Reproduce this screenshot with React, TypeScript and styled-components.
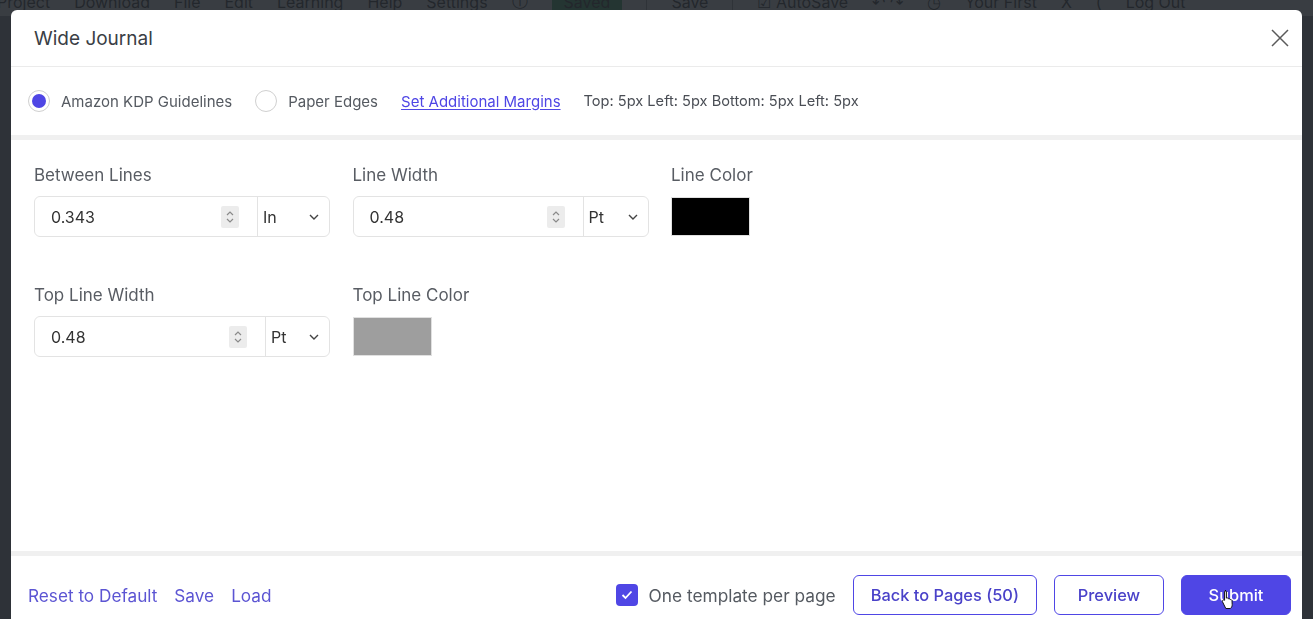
import React from 'react'
import styled, { createGlobalStyle } from 'styled-components'

const GlobalStyle = createGlobalStyle`
  html, body {
    margin: 0;
    height: 100%;
    overflow: hidden;
  }
  body {
    font-family: Inter, "Noto Sans", sans-serif;
    background-color: #8a8f96;
  }
`

const indigo = '#4f46e5'

// app behind the modal, mostly hidden
const AppBar = styled.header`
	display: flex;
	align-items: center;
	gap: 24px;
	height: 28px;
	margin-top: -12px;
	margin-left: -3px;
	background-color: #ffffff;
	color: #222;
	font-size: 16px;
	white-space: nowrap;
`

const AppItem = styled.span<{ $green?: boolean }>`
	padding: ${(p) => (p.$green ? '2px 12px' : '0')};
	background-color: ${(p) => (p.$green ? '#2faa5f' : 'transparent')};
`

const AppDivider = styled.span`
	width: 1px;
	height: 22px;
	background-color: #999;
`

const Overlay = styled.div`
	position: fixed;
	inset: 0;
	background-color: rgba(36, 40, 46, 0.9);
	padding: 10px 11px 0 11px;
	overflow: hidden;
`

const Modal = styled.div`
	background-color: #fff;
	border-radius: 6px 6px 0 0;
	height: 624px;
	display: flex;
	flex-direction: column;
`

const ModalHeader = styled.div`
	height: 57px;
	flex: 0 0 auto;
	display: flex;
	align-items: center;
	justify-content: space-between;
	padding: 0 12px 0 23px;
	border-bottom: 1px solid #ebebeb;
	box-sizing: border-box;
`

const Title = styled.h2`
	margin: 0;
	font-size: 19px;
	font-weight: 400;
	color: #3a3e45;
`

const CloseButton = styled.button`
	border: none;
	background: none;
	padding: 0;
	width: 20px;
	height: 20px;
	display: flex;
	cursor: pointer;
`

const OptionsRow = styled.div`
	height: 68px;
	flex: 0 0 auto;
	display: flex;
	align-items: center;
	gap: 23px;
	padding: 0 17px;
	font-size: 15px;
	color: #555a61;
	border-bottom: 5px solid #f0f0f0;
`

const RadioItem = styled.label`
	display: flex;
	align-items: center;
	gap: 11px;
`

const RadioDot = styled.span<{ $checked?: boolean }>`
	width: 22px;
	height: 22px;
	box-sizing: border-box;
	border-radius: 50%;
	border: 1px solid #cfcfcf;
	background-color: #fff;
	display: flex;
	align-items: center;
	justify-content: center;
	&::after {
		content: '';
		width: 14px;
		height: 14px;
		border-radius: 50%;
		background-color: ${(p) => (p.$checked ? indigo : 'transparent')};
	}
`

const MarginsLink = styled.a`
	color: ${indigo};
	text-decoration: underline;
	text-underline-offset: 2px;
`

const MarginsInfo = styled.span`
	color: #4a4e55;
	font-size: 14.6px;
`

const Body = styled.div`
	flex: 1;
	padding: 25px 23px;
	display: grid;
	grid-template-columns: 296px 296px 79px;
	grid-auto-rows: min-content;
	column-gap: 22.5px;
	row-gap: 48px;
	border-bottom: 5px solid #f0f0f0;
`

const Field = styled.div`
	display: flex;
	flex-direction: column;
	gap: 10px;
`

const Label = styled.span`
	font-size: 17px;
	line-height: 21px;
	color: #585c63;
	white-space: nowrap;
`

const InputGroup = styled.div`
	display: flex;
	height: 41px;
	box-sizing: border-box;
	border: 1px solid #e3e3e3;
	border-radius: 6px;
`

const NumberBox = styled.div`
	flex: 1;
	display: flex;
	align-items: center;
	justify-content: space-between;
	padding: 0 18px 0 16px;
	font-size: 16px;
	color: #333;
`

const Spinner = styled.span`
	width: 18px;
	height: 22px;
	border-radius: 2px;
	background-color: #ececec;
	display: flex;
	align-items: center;
	justify-content: center;
`

const UnitSelect = styled.div<{ $width: number }>`
	width: ${(p) => p.$width}px;
	flex: 0 0 auto;
	display: flex;
	align-items: center;
	justify-content: space-between;
	padding: 0 10px 0 5px;
	box-sizing: border-box;
	border-left: 1px solid #e3e3e3;
	font-size: 16px;
	color: #333;
`

const Swatch = styled.div<{ $color: string }>`
	width: 79px;
	height: 39px;
	margin-top: 1px;
	background-color: ${(p) => p.$color};
	border: 1px solid #e0e0e0;
	box-sizing: border-box;
`

const Footer = styled.div`
	height: 78px;
	flex: 0 0 auto;
	display: flex;
	align-items: flex-start;
	justify-content: space-between;
	padding: 19px 11px 0 17px;
	box-sizing: border-box;
`

const FooterLinks = styled.div`
	display: flex;
	align-items: center;
	gap: 17px;
	height: 40px;
`

const FooterLink = styled.a`
	color: #5c55d3;
	font-size: 17.2px;
	cursor: pointer;
`

const FooterActions = styled.div`
	display: flex;
	align-items: center;
	gap: 17px;
`

const CheckItem = styled.label`
	display: flex;
	align-items: center;
	gap: 11px;
	font-size: 17.3px;
	color: #555a61;
`

const CheckBox = styled.span`
	width: 22px;
	height: 22px;
	border-radius: 4px;
	background-color: ${indigo};
	display: flex;
	align-items: center;
	justify-content: center;
`

const Button = styled.button<{ $primary?: boolean }>`
	position: relative;
	height: 40px;
	min-width: 110px;
	padding: 0 17px;
	border-radius: 6px;
	border: 1px solid ${indigo};
	background-color: ${(p) => (p.$primary ? indigo : '#fff')};
	color: ${(p) => (p.$primary ? '#fff' : '#4a42c9')};
	font-family: inherit;
	font-size: 16.4px;
	font-weight: 500;
	cursor: pointer;
`

const Cursor = styled.svg`
	position: absolute;
	left: 39px;
	top: 13px;
`

const ChevronDown = () => (
	<svg width='10' height='6' viewBox='0 0 10 6'>
		<path d='M1 1l4 4 4-4' fill='none' stroke='#444' strokeWidth='1.4' />
	</svg>
)

const SpinIcon = () => (
	<Spinner>
		<svg width='8' height='14' viewBox='0 0 8 14'>
			<path d='M1 5l3-3 3 3M1 9l3 3 3-3' fill='none' stroke='#8a8a8a' strokeWidth='1.2' />
		</svg>
	</Spinner>
)

interface NumberFieldProps {
	label: string
	value: string
	unit: string
	unitWidth: number
}

const NumberField: React.FC<NumberFieldProps> = ({ label, value, unit, unitWidth }) => (
	<Field>
		<Label>{label}</Label>
		<InputGroup>
			<NumberBox>
				{value}
				<SpinIcon />
			</NumberBox>
			<UnitSelect $width={unitWidth}>
				{unit}
				<ChevronDown />
			</UnitSelect>
		</InputGroup>
	</Field>
)

const ColorField: React.FC<{ label: string; color: string }> = ({ label, color }) => (
	<Field>
		<Label>{label}</Label>
		<Swatch $color={color} />
	</Field>
)

const App: React.FC = () => {
	return (
		<>
			<GlobalStyle />
			<AppBar>
				<AppItem>Project</AppItem>
				<AppItem>Download</AppItem>
				<AppItem>File</AppItem>
				<AppItem>Edit</AppItem>
				<AppItem>Learning</AppItem>
				<AppItem>Help</AppItem>
				<AppItem>Settings</AppItem>
				<AppItem>ⓘ</AppItem>
				<AppItem $green>Saved</AppItem>
				<AppDivider />
				<AppItem>Save</AppItem>
				<AppDivider />
				<AppItem>☑ AutoSave</AppItem>
				<AppItem>↶ ↷</AppItem>
				<AppItem>◷</AppItem>
				<AppItem>Your First</AppItem>
				<AppItem>X</AppItem>
				<AppItem>(</AppItem>
				<AppItem>Log Out</AppItem>
			</AppBar>
			<Overlay>
				<Modal>
					<ModalHeader>
						<Title>Wide Journal</Title>
						<CloseButton aria-label='Close'>
							<svg width='20' height='20' viewBox='0 0 20 20'>
								<path d='M2 2l16 16M18 2L2 18' stroke='#5a5a5a' strokeWidth='1.5' />
							</svg>
						</CloseButton>
					</ModalHeader>

					<OptionsRow>
						<RadioItem>
							<RadioDot $checked />
							Amazon KDP Guidelines
						</RadioItem>
						<RadioItem>
							<RadioDot />
							Paper Edges
						</RadioItem>
						<MarginsLink>Set Additional Margins</MarginsLink>
						<MarginsInfo>Top: 5px Left: 5px Bottom: 5px Left: 5px</MarginsInfo>
					</OptionsRow>

					<Body>
						<NumberField label='Between Lines' value='0.343' unit='In' unitWidth={72} />
						<NumberField label='Line Width' value='0.48' unit='Pt' unitWidth={65} />
						<ColorField label='Line Color' color='#000' />
						<NumberField label='Top Line Width' value='0.48' unit='Pt' unitWidth={64} />
						<ColorField label='Top Line Color' color='#9e9e9e' />
					</Body>

					<Footer>
						<FooterLinks>
							<FooterLink>Reset to Default</FooterLink>
							<FooterLink>Save</FooterLink>
							<FooterLink>Load</FooterLink>
						</FooterLinks>
						<FooterActions>
							<CheckItem>
								<CheckBox>
									<svg width='12' height='10' viewBox='0 0 12 10'>
										<path d='M1.5 5l3 3 6-6.5' fill='none' stroke='#fff' strokeWidth='1.8' />
									</svg>
								</CheckBox>
								One template per page
							</CheckItem>
							<Button>Back to Pages (50)</Button>
							<Button>Preview</Button>
							<Button $primary>
								Submit
								<Cursor width='14' height='20' viewBox='0 0 14 20'>
									<path
										d='M4 1.5c.8 0 1.4.6 1.4 1.4v6.2l.3-.1c.8-.3 1.6.1 1.8.8.8-.3 1.6.1 1.8.8.8-.2 1.6.3 1.7 1.1l.2 3.8c0 1.6-.6 3-1.8 4H4.8L1.6 13c-.5-.8-.2-1.7.6-2 .5-.2 1-.1 1.4.3V2.9c0-.8.6-1.4 1.4-1.4z'
										fill='#fff'
										stroke='#111'
										strokeWidth='1'
									/>
								</Cursor>
							</Button>
						</FooterActions>
					</Footer>
				</Modal>
			</Overlay>
		</>
	)
}

export default App
